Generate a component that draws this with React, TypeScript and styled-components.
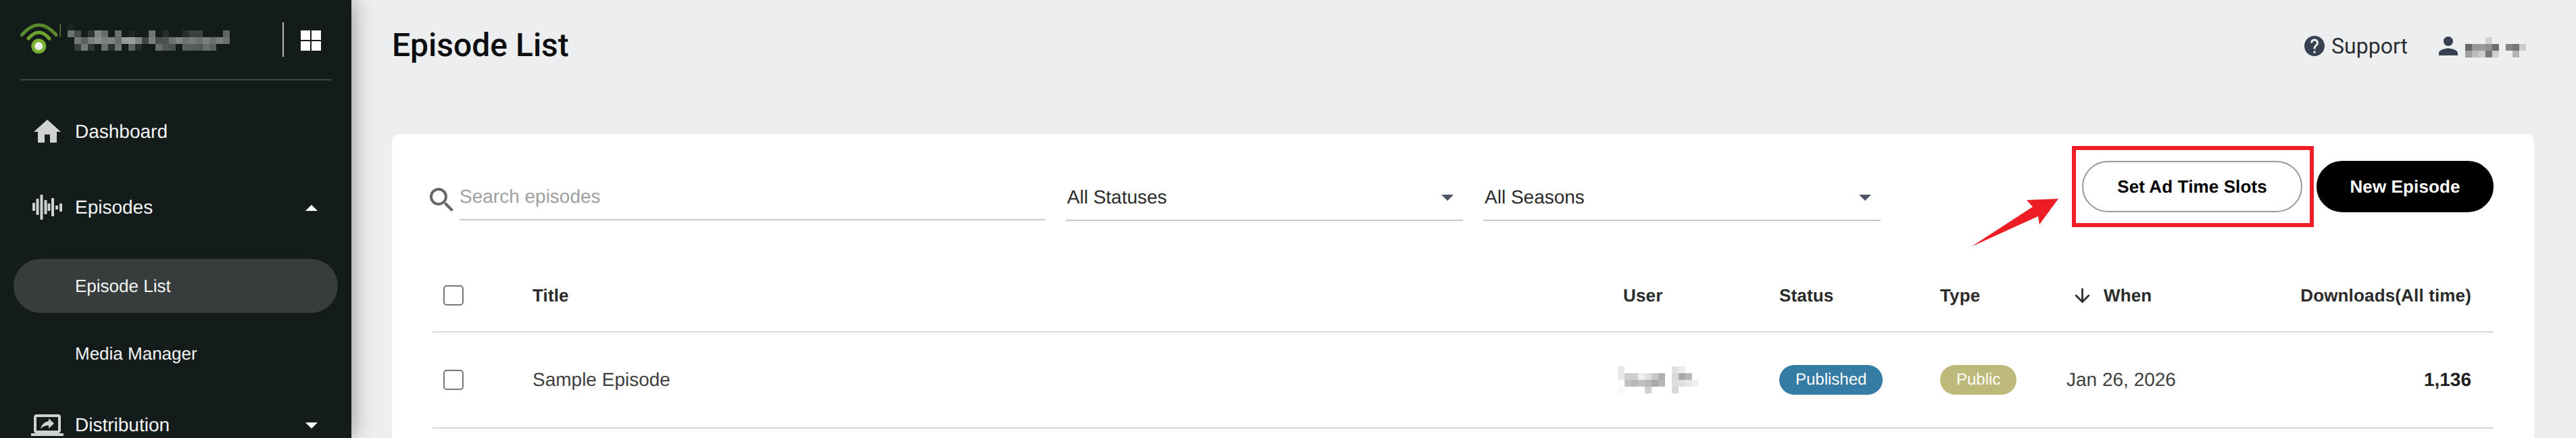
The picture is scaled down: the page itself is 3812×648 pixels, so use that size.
import React from "react";
import styled, { createGlobalStyle } from "styled-components";
import {
  MdArrowDownward,
  MdHelp,
  MdHome,
  MdOutlineScreenShare,
  MdPerson,
  MdSearch,
} from "react-icons/md";

const GlobalStyle = createGlobalStyle`
  html, body {
    margin: 0;
    height: 100%;
    overflow: hidden;
    background: #edeef0;
    font-family: "Liberation Sans", Arial, sans-serif;
    text-rendering: geometricPrecision;
  }
  * {
    box-sizing: border-box;
  }
`;

const Page = styled.div`
  display: flex;
  width: 3812px;
  height: 648px;
  overflow: hidden;
`;

const Sidebar = styled.aside`
  position: relative;
  z-index: 1;
  flex: 0 0 520px;
  height: 648px;
  overflow: hidden;
  background: #141c1b;
  color: #f4f5f5;
  box-shadow: 0 0 32px rgba(0, 0, 0, 0.42);
`;

const Brand = styled.div`
  display: flex;
  align-items: flex-start;
  height: 117px;
  padding: 33px 0 0 30px;
`;

const BrandName = styled.div`
  margin: 2px 0 0 10px;
  line-height: 0;
`;

const BrandDivider = styled.div`
  width: 2px;
  height: 51px;
  margin-left: 78px;
  background: #b4b7b6;
`;

const AppsGrid = styled.div`
  display: grid;
  grid-template-columns: 14px 14px;
  grid-template-rows: 14px 14px;
  gap: 2px;
  margin: 12px 0 0 25px;
`;

const AppsCell = styled.div`
  background: #ffffff;
`;

const Rule = styled.div`
  height: 2px;
  margin: 0 30px 20px;
  background: #404645;
`;

const NavItem = styled.div`
  display: flex;
  align-items: center;
  height: 112px;
  padding: 0 50px 0 46px;
  font-size: 28px;
`;

const NavIcon = styled.span`
  display: flex;
  flex: 0 0 48px;
  margin-right: 17px;
  color: #d0d2d1;
`;

const SubNav = styled.div`
  display: flex;
  flex-direction: column;
  gap: 20px;
  margin: 20px 20px 10px;
`;

const SubItem = styled.div<{ $active?: boolean }>`
  display: flex;
  align-items: center;
  height: 80px;
  padding-left: 91px;
  border-radius: 40px;
  font-size: 26px;
  background: ${(props) => (props.$active ? "#373d3d" : "transparent")};
`;

const Caret = styled.span<{ $up?: boolean; $color: string }>`
  width: 0;
  height: 0;
  margin-left: auto;
  border-left: 9px solid transparent;
  border-right: 9px solid transparent;
  border-${(props) => (props.$up ? "bottom" : "top")}: 9px solid ${(props) => props.$color};
`;

const Main = styled.main`
  flex: 1;
  min-width: 0;
  padding: 0 62px 0 60px;
`;

const TopBar = styled.header`
  display: flex;
  justify-content: space-between;
  height: 198px;
`;

const PageTitle = styled.h1`
  margin: 39px 0 0 0;
  font-family: Roboto, sans-serif;
  font-size: 48px;
  font-weight: 500;
  line-height: 56px;
  color: #0c0d0e;
`;

const TopLinks = styled.div`
  display: flex;
  align-items: flex-start;
  padding: 47px 8px 0 0;
  color: #374151;
`;

const SupportLink = styled.div`
  display: flex;
  align-items: center;
  height: 42px;
  margin: 0 39px 0 0;
  font-family: Roboto, sans-serif;
  font-size: 32px;
  line-height: 42px;
  color: #2a2d30;

  svg {
    margin-right: 7px;
    color: #374151;
  }
`;

const UserLink = styled.div`
  display: flex;
  align-items: flex-start;

  svg {
    margin-right: 4px;
  }
`;

const UserName = styled.div`
  margin-top: 8px;
  line-height: 0;
`;

const Card = styled.section`
  height: 600px;
  padding: 40px 60px 0;
  background: #ffffff;
  border-radius: 12px;
`;

const Toolbar = styled.div`
  display: flex;
  align-items: flex-start;
  height: 146px;
`;

const SearchField = styled.div`
  display: flex;
  align-items: flex-start;
  flex: 0 0 907px;
  margin: 21px 0 0 0;
`;

const SearchIcon = styled.span`
  display: flex;
  flex: 0 0 48px;
  margin: 13px 2px 0 -10px;
  color: #666666;
`;

const SearchInput = styled.div`
  flex: 1;
  height: 67px;
  border-bottom: 2px solid #c9c9c9;
  font-size: 28px;
  line-height: 64px;
  color: #a0a0a0;
`;

const SelectField = styled.div`
  display: flex;
  align-items: center;
  justify-content: space-between;
  flex: 0 0 588px;
  height: 68px;
  margin: 21px 0 0 30px;
  padding: 0 14px 0 2px;
  border-bottom: 2px solid #c9c9c9;
  font-size: 28px;
  color: #2b2b2b;
`;

const ButtonGroup = styled.div`
  display: flex;
  gap: 21px;
  margin-left: auto;
`;

const Highlighted = styled.div`
  position: relative;
`;

const HighlightBox = styled.div`
  position: absolute;
  inset: -22px -17px -22px -15px;
  border: 6px solid #ee1c25;
  pointer-events: none;
`;

const Pointer = styled.svg`
  position: absolute;
  left: -164px;
  top: 56px;
`;

const PillButton = styled.div<{ $dark?: boolean }>`
  display: flex;
  align-items: center;
  justify-content: center;
  height: 76px;
  width: ${(props) => (props.$dark ? "262px" : "326px")};
  border-radius: 38px;
  border: 2px solid ${(props) => (props.$dark ? "#000000" : "#999999")};
  background: ${(props) => (props.$dark ? "#000000" : "#ffffff")};
  color: ${(props) => (props.$dark ? "#ffffff" : "#000000")};
  font-size: 26px;
  font-weight: 700;
  letter-spacing: 0.12px;
`;

const Row = styled.div<{ $head?: boolean }>`
  display: grid;
  grid-template-columns: 148px 1614px 231px 238px 187px 322px 310px;
  align-items: center;
  height: ${(props) => (props.$head ? "108px" : "142px")};
  border-bottom: 2px solid #d8d8d8;
  font-size: ${(props) => (props.$head ? "26px" : "28px")};
  font-weight: ${(props) => (props.$head ? 700 : 400)};
  letter-spacing: ${(props) => (props.$head ? "0.15px" : "0")};
  color: ${(props) => (props.$head ? "#2b2b2b" : "#3f3f3f")};
`;

const CheckCell = styled.div`
  padding-left: 16px;
`;

const Checkbox = styled.div`
  width: 30px;
  height: 30px;
  border: 2px solid #777777;
  border-radius: 5px;
`;

const SortCell = styled.div`
  display: flex;
  align-items: center;
  margin-left: 7px;

  svg {
    margin-right: 15px;
  }
`;

const NumberCell = styled.div<{ $strong?: boolean }>`
  padding-right: 33px;
  text-align: right;
  font-weight: 700;
  color: ${(props) => (props.$strong ? "#1f1f1f" : "#2b2b2b")};
`;

const UserCell = styled.div`
  margin-left: -8px;
  line-height: 0;
`;

const Badge = styled.span<{ $color: string }>`
  display: inline-block;
  height: 44px;
  padding: 0 24px;
  border-radius: 22px;
  background: ${(props) => props.$color};
  color: #ffffff;
  font-size: 24px;
  line-height: 44px;
`;

type MosaicProps = {
  rows: string[][];
  cell?: number;
};

// blurred-out names, one colour per block, "" is a gap
const Mosaic: React.FC<MosaicProps> = ({ rows, cell = 10 }) => (
  <svg
    width={rows[0].length * cell}
    height={rows.length * cell}
    shapeRendering="crispEdges"
  >
    {rows.map((row, y) =>
      row.map((color, x) =>
        color ? (
          <rect key={`${x}-${y}`} x={x * cell} y={y * cell} width={cell} height={cell} fill={color} />
        ) : null
      )
    )}
  </svg>
);

const brandBlocks = [
  ["#1c2423", "", "", "", "", "", "", "", "", "", "", "", "", "", "", "", "", "", "", "", "", "", "", ""],
  ["#6c7372", "#454c4b", "", "#2d3433", "#808685", "#666c6b", "", "#6a706f", "", "#1f2726", "", "", "#6f7574", "", "#252c2b", "", "", "#272e2d", "#3a4140", "#3a4140", "", "", "", "#5e6564"],
  ["", "#727978", "#5a6160", "#7a807f", "#8a908f", "#7a807f", "#7f8584", "#666c6b", "#949a99", "#9aa09f", "#7f8584", "#404746", "#7a807f", "#474e4d", "#4a5150", "#6d7372", "#7f8584", "#6d7372", "#747a79", "#6a706f", "#7a807f", "#6a706f", "#787e7d", "#6a706f"],
  ["", "#383f3e", "#737978", "#323938", "", "#6a706f", "#2a3130", "#6f7574", "", "#5d6362", "#252c2b", "", "", "#686e6d", "#515857", "#474e4d", "", "#5a605f", "#565c5b", "#505756", "#666c6b", "#5a605f", "", ""],
];

const accountBlocks = [
  ["", "", "", "#d0d0d0", "", "", "", "", ""],
  ["#666666", "#999999", "#9a9a9a", "#909090", "#6e6e6e", "", "#868686", "#777777", "#cccccc"],
  ["#a0a0a0", "#bbbbbb", "#cccccc", "#777777", "#d0d0d0", "", "", "#b5b5b5", ""],
];

const userBlocks = [
  ["#e8e8e8", "", "", "", "", "", "", "", "#e0e0e0", "#eeeeee", "", ""],
  ["#e8e8e8", "#d0d0d0", "#d0d0d0", "#eeeeee", "#e0e0e0", "#c8c8c8", "#b0b0b0", "", "#d8d8d8", "#a8a8a8", "#b8b8b8", ""],
  ["", "#c0c0c0", "#b8b8b8", "#c0c0c0", "#b8b8b8", "#a8a8a8", "#b8b8b8", "", "#dddddd", "#e0e0e0", "#e8e8e8", "#f0f0f0"],
  ["#f8f8f8", "", "", "", "#d0d0d0", "", "", "", "#d8d8d8", "", "", ""],
];

const Logo: React.FC = () => (
  <svg width="60" height="52" viewBox="0 0 60 52" fill="none">
    <path d="M2.5 18.5Q27.5 -10.5 53 18.5" stroke="#5a8a2c" strokeWidth="5" strokeLinecap="round" />
    <path d="M12 24Q27.5 6 43 24" stroke="#6ea32f" strokeWidth="5" strokeLinecap="round" />
    <circle cx="27.3" cy="35.3" r="11" fill="#7ab030" />
    <circle cx="27.3" cy="35.3" r="6" fill="#eeeeee" />
    <rect x="58.5" y="2" width="1.5" height="20" fill="#4e7a2a" />
  </svg>
);

const waveBars = [
  { x: 2, y: 17, h: 12 },
  { x: 7.5, y: 11, h: 24 },
  { x: 13.5, y: 5, h: 37 },
  { x: 19.5, y: 13, h: 21 },
  { x: 24.5, y: 18, h: 11 },
  { x: 30, y: 10, h: 27 },
  { x: 36, y: 21, h: 6 },
  { x: 42, y: 18, h: 12 },
];

const WaveIcon: React.FC = () => (
  <svg width="48" height="48" viewBox="0 0 48 48" fill="currentColor">
    {waveBars.map((bar) => (
      <rect key={bar.x} x={bar.x} y={bar.y} width="4" height={bar.h} rx="1" />
    ))}
  </svg>
);

const App: React.FC = () => (
  <Page>
    <GlobalStyle />
    <Sidebar>
      <Brand>
        <Logo />
        <BrandName>
          <Mosaic rows={brandBlocks} />
        </BrandName>
        <BrandDivider />
        <AppsGrid>
          <AppsCell />
          <AppsCell />
          <AppsCell />
          <AppsCell />
        </AppsGrid>
      </Brand>
      <Rule />
      <NavItem>
        <NavIcon>
          <MdHome size={48} />
        </NavIcon>
        Dashboard
      </NavItem>
      <NavItem>
        <NavIcon>
          <WaveIcon />
        </NavIcon>
        Episodes
        <Caret $up $color="#ffffff" />
      </NavItem>
      <SubNav>
        <SubItem $active>Episode List</SubItem>
        <SubItem>Media Manager</SubItem>
      </SubNav>
      <NavItem>
        <NavIcon>
          <MdOutlineScreenShare size={48} />
        </NavIcon>
        Distribution
        <Caret $color="#ffffff" />
      </NavItem>
    </Sidebar>
    <Main>
      <TopBar>
        <PageTitle>Episode List</PageTitle>
        <TopLinks>
          <SupportLink>
            <MdHelp size={36} />
            Support
          </SupportLink>
          <UserLink>
            <MdPerson size={42} />
            <UserName>
              <Mosaic rows={accountBlocks} />
            </UserName>
          </UserLink>
        </TopLinks>
      </TopBar>
      <Card>
        <Toolbar>
          <SearchField>
            <SearchIcon>
              <MdSearch size={48} />
            </SearchIcon>
            <SearchInput>Search episodes</SearchInput>
          </SearchField>
          <SelectField>
            All Statuses
            <Caret $color="#4b5563" />
          </SelectField>
          <SelectField>
            All Seasons
            <Caret $color="#4b5563" />
          </SelectField>
          <ButtonGroup>
            <Highlighted>
              <PillButton>Set Ad Time Slots</PillButton>
              <HighlightBox />
              <Pointer width="130" height="72" viewBox="0 0 130 72">
                <polygon points="0,71 91,12 82,2 129,0 101,38 99,26" fill="#ee1c25" />
              </Pointer>
            </Highlighted>
            <PillButton $dark>New Episode</PillButton>
          </ButtonGroup>
        </Toolbar>
        <Row $head>
          <CheckCell>
            <Checkbox />
          </CheckCell>
          <div>Title</div>
          <div>User</div>
          <div>Status</div>
          <div>Type</div>
          <SortCell>
            <MdArrowDownward size={33} />
            When
          </SortCell>
          <NumberCell>Downloads(All time)</NumberCell>
        </Row>
        <Row>
          <CheckCell>
            <Checkbox />
          </CheckCell>
          <div>Sample Episode</div>
          <UserCell>
            <Mosaic rows={userBlocks} />
          </UserCell>
          <div>
            <Badge $color="#357ca5">Published</Badge>
          </div>
          <div>
            <Badge $color="#bdb97a">Public</Badge>
          </div>
          <div>Jan 26, 2026</div>
          <NumberCell $strong>1,136</NumberCell>
        </Row>
      </Card>
    </Main>
  </Page>
);

export default App;
